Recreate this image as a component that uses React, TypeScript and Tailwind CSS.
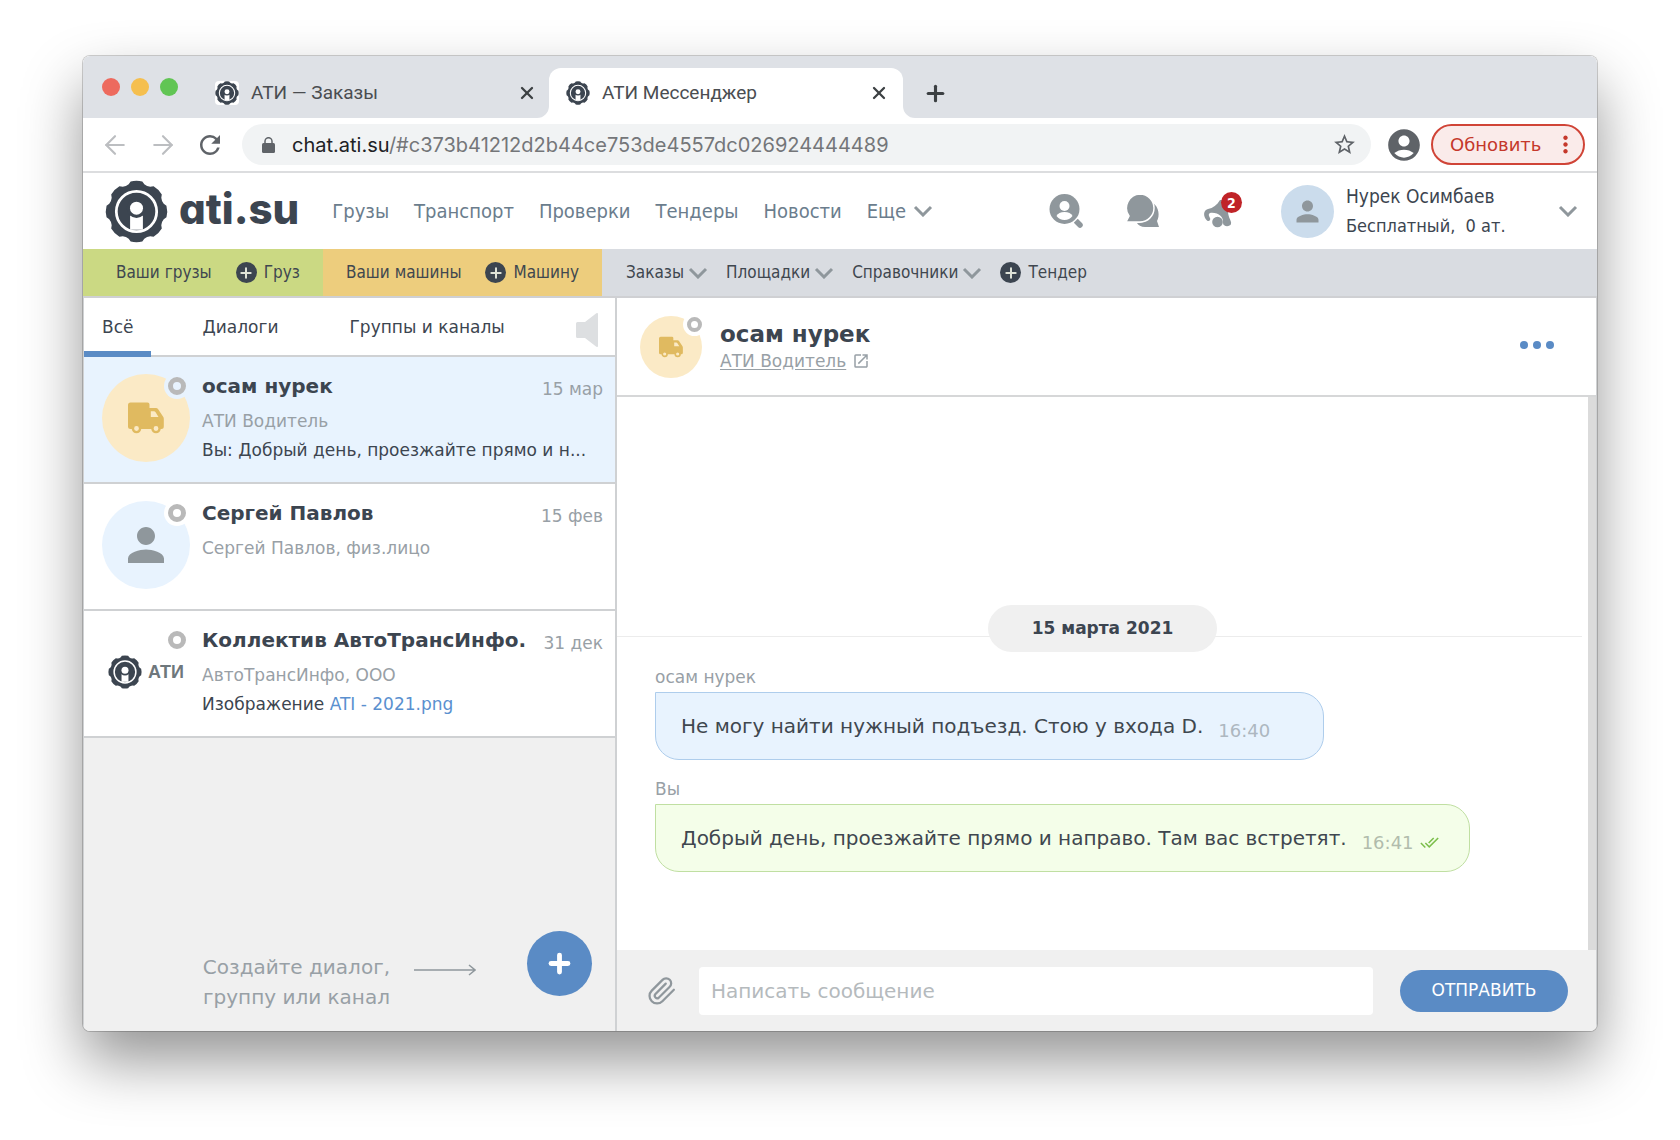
import type { ReactNode } from 'react';
import {
    MdAccountCircle,
    MdDoneAll,
    MdMoreVert,
    MdOpenInNew,
    MdPerson,
    MdRefresh,
    MdStarBorder,
} from 'react-icons/md';
import { ArrowLeft, ArrowRight, Plus, X } from 'lucide-react';

const NAV = ['Грузы', 'Транспорт', 'Проверки', 'Тендеры', 'Новости'];
const MENUS = ['Заказы', 'Площадки', 'Справочники'];

// Outline of the eight-tooth gear, centred in a 64x64 box
function gearPath() {
    const at = (deg: number, r: number) => {
        const a = (deg * Math.PI) / 180;
        return `${(32 + r * Math.sin(a)).toFixed(2)} ${(32 - r * Math.cos(a)).toFixed(2)}`;
    };
    let d = '';
    for (let i = 0; i < 8; i++) {
        const c = i * 45;
        d += `${i === 0 ? 'M' : 'L'}${at(c - 11, 31)}Q${at(c, 32)} ${at(c + 11, 31)}L${at(c + 16, 28.8)}Q${at(c + 22.5, 27.5)} ${at(c + 29, 28.8)}`;
    }
    return `${d}Z`;
}

const GEAR = gearPath();

function GearLogo({ className }: { className: string }) {
    return (
        <svg viewBox="0 0 64 64" className={className} aria-hidden="true">
            <path d={GEAR} fill="#3c4550" />
            <circle cx="32" cy="32" r="20.5" fill="none" stroke="#fff" strokeWidth="2.8" />
            <path d="M25.5 36h13v14.5h-13z" fill="#fff" />
            <circle cx="32" cy="28.6" r="10" fill="#3c4550" />
            <circle cx="32" cy="28.6" r="6.6" fill="#fff" />
        </svg>
    );
}

function Truck({ className }: { className: string }) {
    return (
        <svg viewBox="0 0 36 32" className={className} aria-hidden="true">
            <path
                fill="#e0ba60"
                fillRule="evenodd"
                d="M2.500.5H19.500a2 2 0 0 1 2 2V6H28a2.500 2.500 0 0 1 2 1l5 7.500a4 4 0 0 1 .8 2.300V24.500a2.500 2.500 0 0 1-2.500 2.500H2.500a2.500 2.500 0 0 1-2.500-2.500V3A2.500 2.500 0 0 1 2.500.5zM22.800 9.300v5.600h7.700l-2.900-4.600a2 2 0 0 0-1.700-1z"
            />
            <circle cx="8.500" cy="26.500" r="3.600" fill="#fbeac6" stroke="#e0ba60" strokeWidth="2.400" />
            <circle cx="28" cy="26.500" r="3.600" fill="#fbeac6" stroke="#e0ba60" strokeWidth="2.400" />
        </svg>
    );
}

function Chevron() {
    return (
        <svg viewBox="0 0 20 12" className="h-3 w-5 shrink-0" aria-hidden="true">
            <path d="M2 2l8 8 8-8" fill="none" stroke="#8f979c" strokeWidth="3" />
        </svg>
    );
}

function PlusCircle() {
    return (
        <span className="flex size-[21px] items-center justify-center rounded-full bg-[#3c4550] text-[#dfe3d8]">
            <Plus size={16} strokeWidth={3} aria-hidden="true" />
        </span>
    );
}

function BrowserTab({ title, active }: { title: string; active?: boolean }) {
    return (
        <div
            className={
                active
                    ? 'relative flex h-[50px] w-[354px] items-center self-end rounded-t-xl bg-white pr-3.5 pl-[17px]'
                    : 'flex h-[50px] w-[334px] items-center self-end pr-3'
            }
        >
            {active && (
                <>
                    <svg viewBox="0 0 12 12" className="absolute bottom-0 -left-3 size-3" aria-hidden="true">
                        <path d="M12 0v12H0A12 12 0 0 0 12 0z" fill="#fff" />
                    </svg>
                    <svg viewBox="0 0 12 12" className="absolute -right-3 bottom-0 size-3" aria-hidden="true">
                        <path d="M0 0v12h12A12 12 0 0 1 0 0z" fill="#fff" />
                    </svg>
                </>
            )}
            <span className="flex size-6 items-center justify-center rounded-sm bg-white">
                <GearLogo className="size-6" />
            </span>
            <span className="ml-3 flex-1 font-[Roboto,sans-serif] text-[19px] text-[#4a4d51]">{title}</span>
            <button type="button" aria-label="Закрыть вкладку" className="text-[#3c4043]">
                <X size={20} strokeWidth={2.75} />
            </button>
        </div>
    );
}

function BrowserChrome() {
    return (
        <div className="border-b-2 border-[#dcdddf] bg-white">
            <div className="flex h-[62px] items-center bg-[#dee1e6] pl-[19px]">
                <div className="mr-[37px] flex gap-[11px]">
                    <span className="size-[18px] rounded-full bg-[#ed6a5e]" />
                    <span className="size-[18px] rounded-full bg-[#f5bf4f]" />
                    <span className="size-[18px] rounded-full bg-[#61c554]" />
                </div>
                <BrowserTab title="АТИ — Заказы" />
                <BrowserTab title="АТИ Мессенджер" active />
                <button type="button" aria-label="Новая вкладка" className="mt-3 ml-5 text-[#3c4043]">
                    <Plus size={25} strokeWidth={3} />
                </button>
            </div>
            <div className="flex h-[53px] items-center pr-3 pl-[17px]">
                <button type="button" aria-label="Назад" className="mr-[18px] text-[#bcbec1]">
                    <ArrowLeft size={30} strokeWidth={1.75} />
                </button>
                <button type="button" aria-label="Вперёд" className="mr-[17px] text-[#bcbec1]">
                    <ArrowRight size={30} strokeWidth={1.75} />
                </button>
                <button type="button" aria-label="Обновить страницу" className="mr-[17px] text-[#5f6368]">
                    <MdRefresh size={30} />
                </button>
                <div className="flex h-[41px] flex-1 items-center rounded-full bg-[#f1f3f4] pr-3.5 pl-5">
                    <svg viewBox="0 0 13 16" className="mr-[17px] h-4 w-[13px]" aria-hidden="true">
                        <rect y="6" width="13" height="10" rx="1.5" fill="#5f6368" />
                        <path d="M3 7V4.200a3.500 3.500 0 0 1 7 0V7" fill="none" stroke="#5f6368" strokeWidth="1.500" />
                    </svg>
                    <span className="flex-1 font-[Inter,sans-serif] text-xl text-[#747679]">
                        <span className="text-[#202124]">chat.ati.su</span>/#c373b41212d2b44ce753de4557dc026924444489
                    </span>
                    <button type="button" aria-label="В закладки" className="text-[#5f6368]">
                        <MdStarBorder size={25} />
                    </button>
                </div>
                <button type="button" aria-label="Профиль" className="ml-3.5 text-[#5f6368]">
                    <MdAccountCircle size={38} />
                </button>
                <button
                    type="button"
                    className="ml-2 flex h-[41px] w-[154px] items-center justify-between rounded-full border-2 border-[#d04437] bg-[#faebea] pr-1 pl-[17px] text-lg text-[#c5382b]"
                >
                    Обновить
                    <MdMoreVert size={27} aria-hidden="true" />
                </button>
            </div>
        </div>
    );
}

function SiteHeader() {
    return (
        <header className="flex h-[76px] items-center pr-[19px] pl-[22px] font-['DejaVu_Sans_Condensed','DejaVu_Sans',sans-serif] text-[#3c4550]">
            <a href="#home" className="flex items-center">
                <GearLogo className="size-[63px]" />
                <span className="mb-1 ml-[11px] font-[Inter,sans-serif] text-[42px] leading-none font-extrabold [font-feature-settings:'cv11']">
                    ati.su
                </span>
            </a>
            <nav className="ml-[33px] flex items-center gap-[25px] text-xl text-[#6b7d8d]">
                {NAV.map((item) => (
                    <a key={item} href="#nav">
                        {item}
                    </a>
                ))}
                <button type="button" className="flex items-center gap-[7px]">
                    Еще
                    <Chevron />
                </button>
            </nav>
            <div className="ml-auto flex items-center">
                <button type="button" aria-label="Поиск участников">
                    <svg viewBox="0 0 34 34" className="size-[34px]" aria-hidden="true">
                        <circle cx="15.500" cy="15" r="15" fill="#8f979c" />
                        <path d="M27.500 27.500l3.500 3.500" stroke="#8f979c" strokeWidth="5.500" strokeLinecap="round" />
                        <path d="M22 30.500l8-8" stroke="#fff" strokeWidth="1.500" />
                        <circle cx="15.500" cy="12" r="5" fill="#fff" />
                        <path d="M7.500 22q2-4 8-4t8 4q-3 4-8 4t-8-4z" fill="#fff" />
                    </svg>
                </button>
                <button type="button" aria-label="Сообщения" className="ml-[43px]">
                    <svg viewBox="0 0 34 34" className="size-[34px]" aria-hidden="true">
                        <path d="M27 9c6 4 7 13 4 18l2 6H19c-4 0-7-2-8-4 11 0 18-8 16-20z" fill="#8f979c" />
                        <path
                            d="M14 0a14 14 0 1 1 0 28H0l3-6A14 14 0 0 1 14 0z"
                            fill="#8f979c"
                            stroke="#fff"
                            strokeWidth="1.500"
                        />
                    </svg>
                </button>
                <button type="button" aria-label="Уведомления: 2" className="relative ml-[43px]">
                    <svg viewBox="-1 -6 34 34" className="size-[34px]" aria-hidden="true">
                        <path
                            d="M16 0C13 5 9 8 4 9C-1 10 -1 17 3 20.500C5 22 7 20 6 18C5 16 4 14 6 13C14 12 20 17 19 23C19 27 26 27 27 24C28 21 24 18 24 11V0z"
                            fill="#8f979c"
                        />
                        <circle cx="13.500" cy="22" r="5.300" fill="#8f979c" />
                    </svg>
                    <span className="absolute -top-0.5 left-[18px] flex size-[21px] items-center justify-center rounded-full bg-[#c02428] text-sm font-bold text-white">
                        2
                    </span>
                </button>
                <span className="ml-11 flex size-[53px] items-center justify-center rounded-full bg-[#cbdcec]">
                    <MdPerson size={33} className="text-[#8f979c]" aria-hidden="true" />
                </span>
                <div className="ml-3 w-[212px] text-[19px] leading-[29px]">
                    <p>Нурек Осимбаев</p>
                    <p className="text-lg leading-[29px] whitespace-pre">Бесплатный,  0 ат.</p>
                </div>
                <button type="button" aria-label="Меню профиля">
                    <Chevron />
                </button>
            </div>
        </header>
    );
}

function SubNav() {
    return (
        <nav className="flex h-[49px] items-stretch border-b-2 border-[#cfd0d3] bg-[#d9dce1] font-['DejaVu_Sans_Condensed','DejaVu_Sans',sans-serif] text-[17px] text-[#3f474f]">
            <div className="flex w-[240px] items-center justify-between bg-[#cbd983] pr-[23px] pl-[33px]">
                <a href="#loads">Ваши грузы</a>
                <button type="button" className="flex items-center gap-[7px]">
                    <PlusCircle />
                    Груз
                </button>
            </div>
            <div className="flex w-[279px] items-center justify-between bg-[#edcd7d] pr-[23px] pl-[23px]">
                <a href="#trucks">Ваши машины</a>
                <button type="button" className="flex items-center gap-[7px]">
                    <PlusCircle />
                    Машину
                </button>
            </div>
            <div className="flex items-center gap-[18px] pl-6">
                {MENUS.map((menu) => (
                    <button key={menu} type="button" className="flex items-center gap-1">
                        {menu}
                        <Chevron />
                    </button>
                ))}
                <button type="button" className="flex items-center gap-[7px]">
                    <PlusCircle />
                    Тендер
                </button>
            </div>
        </nav>
    );
}

function Status({ className }: { className: string }) {
    return <span className={`absolute box-content rounded-full border-solid border-[#b9b9b9] ring-4 ${className}`} />;
}

type ChatItemProps = {
    name: string;
    company: string;
    date: string;
    avatar: ReactNode;
    preview?: ReactNode;
    selected?: boolean;
};

function ChatItem({ name, company, date, avatar, preview, selected }: ChatItemProps) {
    return (
        <li className={`border-b-2 border-[#cfd1d3] ${selected ? 'bg-[#e8f3fe]' : 'bg-white'}`}>
            <a href="#chat" className="flex h-[125px] items-start pt-[17px] pr-3 pl-[18px]">
                <span className="relative shrink-0">
                    {avatar}
                    <Status
                        className={`top-[3px] right-1 size-[8px] border-[5px] ${selected ? 'bg-[#e8f3fe] ring-[#e8f3fe]' : 'bg-white ring-white'}`}
                    />
                </span>
                <span className="ml-3 block min-w-0 flex-1">
                    <span className="flex items-start justify-between gap-2">
                        <strong className="truncate text-xl leading-6">{name}</strong>
                        <time className="shrink-0 pt-[3px] text-[17px] leading-6 text-[#98a0a6]">{date}</time>
                    </span>
                    <span className="mt-1.5 block text-[17px] leading-[29px] text-[#98a0a6]">{company}</span>
                    <span className="block text-[17px] leading-[29px] whitespace-nowrap">{preview}</span>
                </span>
            </a>
        </li>
    );
}

function Sidebar() {
    return (
        <aside className="flex w-[533px] shrink-0 flex-col border-r-2 border-[#cfd1d3] bg-[#f0f0f0]">
            <div className="flex h-[59px] items-stretch border-b-2 border-[#cfd1d3] bg-white text-[17px]">
                <button type="button" className="-mb-0.5 border-b-[6px] border-[#5a8bc5] px-[18px] pt-1.5">
                    Всё
                </button>
                <button type="button" className="ml-[51px] pt-0.5">
                    Диалоги
                </button>
                <button type="button" className="ml-[71px] pt-0.5">
                    Группы и каналы
                </button>
                <button type="button" aria-label="Звук" className="mr-[17px] ml-auto">
                    <svg viewBox="0 0 22 34" className="mt-1.5 h-[34px] w-[22px]" aria-hidden="true">
                        <path d="M1.500 9H9L20 .5q2-1.500 2 1v31q0 2.500-2 1L9 25H1.500Q0 25 0 23.500v-13Q0 9 1.500 9z" fill="#dddfe1" />
                    </svg>
                </button>
            </div>
            <ul>
                <ChatItem
                    selected
                    name="осам нурек"
                    company="АТИ Водитель"
                    date="15 мар"
                    preview="Вы: Добрый день, проезжайте прямо и н..."
                    avatar={
                        <span className="flex size-[88px] items-center justify-center rounded-full bg-[#fbeac6]">
                            <Truck className="h-8 w-9" />
                        </span>
                    }
                />
                <ChatItem
                    name="Сергей Павлов"
                    company="Сергей Павлов, физ.лицо"
                    date="15 фев"
                    avatar={
                        <span className="flex size-[88px] items-center justify-center rounded-full bg-[#e8f3fe]">
                            <MdPerson size={54} className="text-[#8f979c]" aria-hidden="true" />
                        </span>
                    }
                />
                <ChatItem
                    name="Коллектив АвтоТрансИнфо."
                    company="АвтоТрансИнфо, ООО"
                    date="31 дек"
                    preview={
                        <>
                            Изображение <span className="text-[#5a90cf]">ATI - 2021.png</span>
                        </>
                    }
                    avatar={
                        <span className="flex size-[88px] items-center justify-center gap-1.5 rounded-full bg-white">
                            <GearLogo className="size-[34px]" />
                            <span className="font-['Liberation_Sans',sans-serif] text-lg font-bold text-[#6e777c]">
                                АТИ
                            </span>
                        </span>
                    }
                />
            </ul>
            <div className="mt-auto flex items-end justify-end pr-[23px] pb-[19px] text-[#98a0a6]">
                <p className="text-right text-xl leading-[30px]">
                    Создайте диалог,
                    <br />
                    группу или канал
                </p>
                <svg viewBox="0 0 62 12" className="mr-[51px] mb-9 ml-6 h-3 w-[62px]" aria-hidden="true">
                    <path d="M0 6h60M55 1l6 5-6 5" fill="none" stroke="#8f979c" strokeWidth="1.500" />
                </svg>
                <button
                    type="button"
                    aria-label="Создать"
                    className="mb-4 flex size-[65px] items-center justify-center rounded-full bg-[#5a8bc5] text-white"
                >
                    <Plus size={29} strokeWidth={4} />
                </button>
            </div>
        </aside>
    );
}

type MessageProps = { author: string; text: string; time: string; own?: boolean };

function Message({ author, text, time, own }: MessageProps) {
    return (
        <div className="flex flex-col items-start px-[38px]">
            <span className="text-[17px] leading-[30px] text-[#98a0a6]">{author}</span>
            <div
                className={`flex h-[68px] items-center rounded-3xl rounded-tl-none border pl-[25px] ${own ? 'border-[#c0dfa2] bg-[#f4fee9] pr-[30px]' : 'border-[#aecdec] bg-[#e8f3fe] pr-[53px]'}`}
            >
                <p className="text-xl text-[#3f474f]">{text}</p>
                <time className={`mt-2.5 ml-[15px] text-lg ${own ? 'text-[#b1bcac]' : 'text-[#adb7c0]'}`}>{time}</time>
                {own && <MdDoneAll size={19} className="mt-2 ml-1.5 text-[#7cbf4c]" aria-label="Прочитано" />}
            </div>
        </div>
    );
}

function Conversation() {
    return (
        <main className="flex min-w-0 flex-1 flex-col">
            <div className="flex h-[99px] items-center border-b-2 border-[#d6d7d8] bg-white pr-[42px] pl-[23px]">
                <span className="relative">
                    <span className="flex size-[62px] items-center justify-center rounded-full bg-[#fbeac6]">
                        <Truck className="h-[22px] w-6" />
                    </span>
                    <Status className="top-px right-0 size-[7px] border-4 bg-white ring-white" />
                </span>
                <div className="ml-[18px]">
                    <h1 className="text-[23px] leading-7 font-bold">осам нурек</h1>
                    <a href="#profile" className="flex items-center gap-1.5 text-[17px] leading-[26px] text-[#98a0a6]">
                        <span className="underline underline-offset-2">АТИ Водитель</span>
                        <MdOpenInNew size={18} aria-hidden="true" />
                    </a>
                </div>
                <button type="button" aria-label="Действия" className="mb-1 ml-auto flex gap-[5px]">
                    <span className="size-2 rounded-full bg-[#5a8bc5]" />
                    <span className="size-2 rounded-full bg-[#5a8bc5]" />
                    <span className="size-2 rounded-full bg-[#5a8bc5]" />
                </button>
            </div>
            <div className="flex flex-1 bg-white">
                <div className="flex flex-1 flex-col justify-end pb-[78px]">
                    <div className="relative mb-2.5 flex justify-center">
                        <span className="absolute right-1.5 bottom-[15px] left-0 h-px bg-[#ececec]" />
                        <time className="relative rounded-full bg-[#f0f0f0] px-11 text-[17px] leading-[47px] font-bold">
                            15 марта 2021
                        </time>
                    </div>
                    <Message author="осам нурек" text="Не могу найти нужный подъезд. Стою у входа D." time="16:40" />
                    <div className="h-3.5" />
                    <Message own author="Вы" text="Добрый день, проезжайте прямо и направо. Там вас встретят." time="16:41" />
                </div>
                <span className="w-2 bg-[#dbdbdb]" />
            </div>
            <form className="flex h-[81px] items-center bg-[#f0f0f0] pr-7 pl-[30px]">
                <button type="button" aria-label="Прикрепить файл">
                    <svg
                        viewBox="0 0 24 24"
                        className="size-[30px]"
                        fill="none"
                        stroke="#8f979c"
                        strokeWidth="1.800"
                        strokeLinecap="round"
                        aria-hidden="true"
                    >
                        <path d="M21.500 11l-9.200 9.200a6 6 0 0 1-8.500-8.500l8.600-8.600A4 4 0 1 1 18 8.800l-8.600 8.600a2 2 0 0 1-2.800-2.800l8.400-8.500" />
                    </svg>
                </button>
                <input
                    type="text"
                    aria-label="Сообщение"
                    placeholder="Написать сообщение"
                    className="mr-[27px] ml-[22px] h-12 min-w-0 flex-1 rounded-sm bg-white px-3 text-xl outline-none placeholder:text-[#b5babd]"
                />
                <button type="submit" className="h-[42px] w-[168px] rounded-full bg-[#5a8bc5] text-[17px] text-white">
                    ОТПРАВИТЬ
                </button>
            </form>
        </main>
    );
}

export default function App() {
    return (
        <div className="flex min-h-screen bg-white px-[83px] pt-[56px] pb-[109px] font-['DejaVu_Sans',sans-serif] text-[#3c4550]">
            <div className="flex min-w-0 flex-1 flex-col overflow-hidden rounded-[7px] bg-white shadow-[0_0_0_1px_rgba(0,0,0,0.18),0_30px_60px_rgba(0,0,0,0.42)]">
                <BrowserChrome />
                <SiteHeader />
                <SubNav />
                <div className="flex flex-1 border-x border-[#cfd1d3]">
                    <Sidebar />
                    <Conversation />
                </div>
            </div>
        </div>
    );
}
